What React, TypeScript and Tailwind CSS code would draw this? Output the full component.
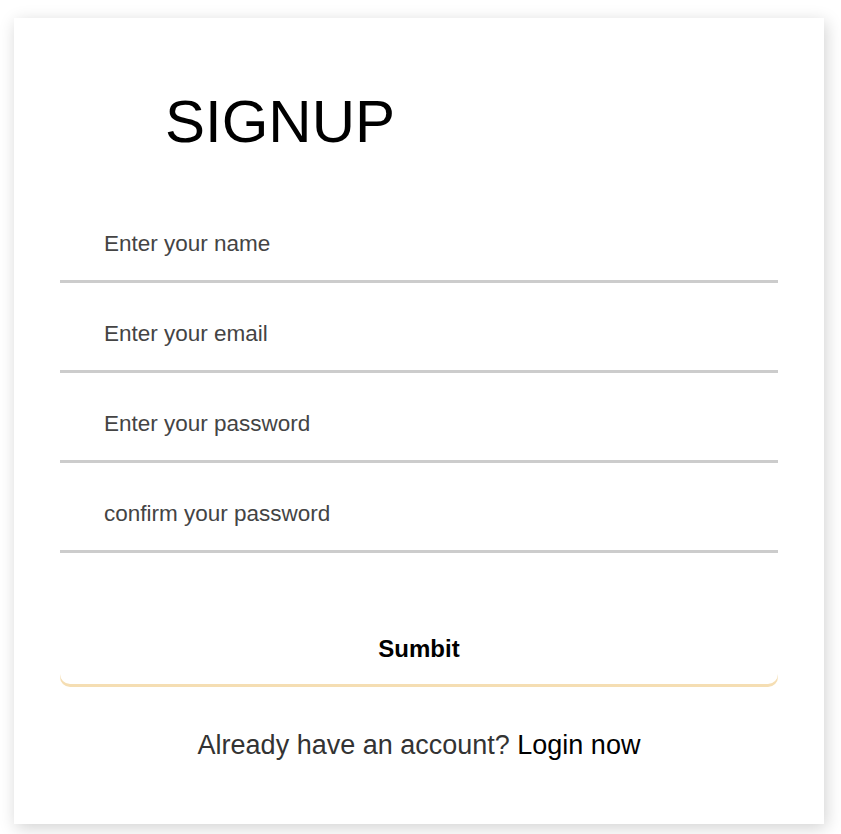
import { useState } from "react";

const fields = [
  { name: "name", type: "text", placeholder: "Enter your name" },
  { name: "email", type: "email", placeholder: "Enter your email" },
  { name: "password", type: "password", placeholder: "Enter your password" },
  { name: "confirm", type: "password", placeholder: "confirm your password" },
];

export default function App() {
  const [values, setValues] = useState<Record<string, string>>({});

  return (
    <div className="min-h-screen bg-white pl-[14px] pt-[18px] font-['Liberation_Sans',Arial,sans-serif]">
      <div className="flex h-[806px] w-[810px] flex-col bg-white px-[46px] pt-[74px] shadow-[2px_4px_16px_rgba(0,0,0,0.18)]">
        <h1 className="pl-[105px] text-[60px] leading-none text-black">SIGNUP</h1>

        <form className="mt-[59px] flex flex-col" onSubmit={(e) => e.preventDefault()}>
          {fields.map((f, i) => (
            <input
              key={f.name}
              type={f.type}
              placeholder={f.placeholder}
              value={values[f.name] ?? ""}
              onChange={(e) => setValues({ ...values, [f.name]: e.target.value })}
              className={`h-[72px] border-b-[3px] border-[#cccccc] pb-[4px] pl-[44px] text-[22.5px] text-[#333] outline-none placeholder:text-[#444] ${
                i > 0 ? "mt-[18px]" : ""
              }`}
            />
          ))}

          <button
            type="submit"
            className="mt-[59px] h-[72px] rounded-[10px] bg-white pt-[2px] text-[24px] font-bold text-black shadow-[0_3px_0_#f5deb3]"
          >
            Sumbit
          </button>
        </form>

        <p className="mt-[41px] text-center text-[27px] text-[#333]">
          Already have an account? <span className="text-black">Login now</span>
        </p>
      </div>
    </div>
  );
}
